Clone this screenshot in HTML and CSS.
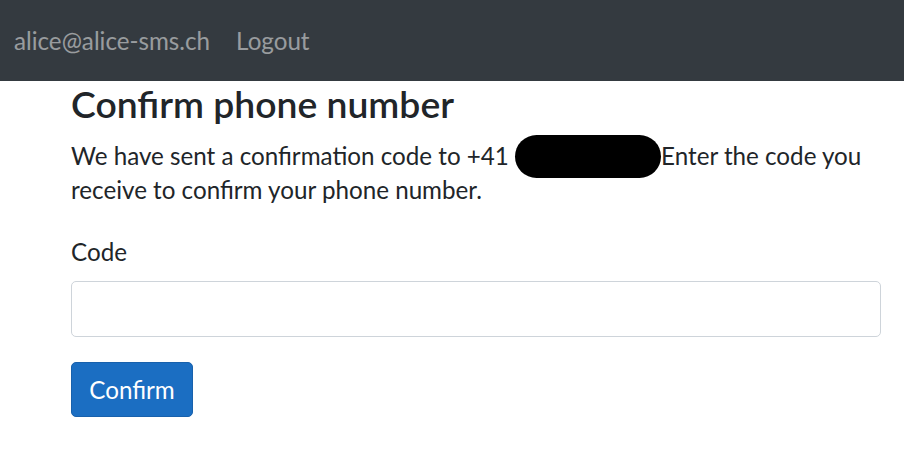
FILE: index.html
```html
<!DOCTYPE html>
<html lang="en">
<head>
<meta charset="utf-8">
<title>Confirm phone number</title>
<link rel="stylesheet" href="styles.css">
</head>
<body>
<header class="navbar">
  <a class="nav-link" href="#">alice@alice-sms.ch</a>
  <a class="nav-link" href="#">Logout</a>
</header>
<main class="container">
  <h4 class="title">Confirm phone number</h4>
  <p class="lead-text"><span>We have sent a confirmation code to +41 </span><span class="redacted"></span><span>Enter the code you </span><span>receive to confirm your phone number.</span></p>
  <form class="form">
    <div class="form-group">
      <label class="form-label" for="code">Code</label>
      <input class="form-control" id="code" type="text">
    </div>
    <button class="btn-primary" type="submit">Confirm</button>
  </form>
</main>
</body>
</html>
```

FILE: styles.css
```css
html, body {
  margin: 0;
  padding: 0;
  background: #fff;
}
body {
  font-family: "Lato", "Noto Sans", sans-serif;
  font-size: 24.2px;
  color: #212529;
}
.navbar {
  height: 81px;
  background: #343a40;
  display: flex;
  align-items: center;
  gap: 26px;
  padding: 0 14px;
  box-sizing: border-box;
}
.nav-link {
  color: rgba(255, 255, 255, 0.5);
  text-decoration: none;
  font-size: 24.2px;
  line-height: 34px;
  padding-top: 1px;
}
.container {
  padding: 2px 23px 0 71px;
}
.title {
  font-size: 37.3px;
  font-weight: 600;
  line-height: 40px;
  margin: 1px 0 0;
}
.lead-text {
  margin: 15px 0 0;
  line-height: 34px;
  max-width: 810px;
}
.redacted {
  display: inline-block;
  width: 146px;
  height: 43px;
  background: #000;
  border-radius: 22px;
  vertical-align: top;
  margin: -4px 0 -5px;
}
.form {
  margin-top: 28px;
}
.form-group {
  display: flex;
  flex-direction: column;
  width: 810px;
}
.form-label {
  line-height: 34px;
  margin-bottom: 12px;
}
.form-control {
  height: 56px;
  box-sizing: border-box;
  border: 1px solid #ced4da;
  border-radius: 5px;
  padding: 8px 17px;
  font: inherit;
  color: #495057;
  background: #fff;
}
.btn-primary {
  margin-top: 25px;
  height: 55px;
  width: 122px;
  box-sizing: border-box;
  background: #1b6ec2;
  border: 1px solid #1861ac;
  border-radius: 5px;
  color: #fff;
  font: inherit;
  padding: 0;
  line-height: 34px;
}
```
